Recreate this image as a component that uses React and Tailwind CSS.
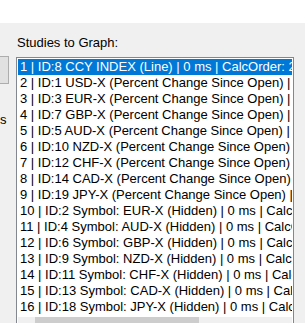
const rows = [
  "1 | ID:8 CCY INDEX (Line) | 0 ms | CalcOrder: 2",
  "2 | ID:1 USD-X (Percent Change Since Open) | 0 ms",
  "3 | ID:3 EUR-X (Percent Change Since Open) | 0 ms",
  "4 | ID:7 GBP-X (Percent Change Since Open) | 0 ms",
  "5 | ID:5 AUD-X (Percent Change Since Open) | 0 ms",
  "6 | ID:10 NZD-X (Percent Change Since Open) | 0 ms",
  "7 | ID:12 CHF-X (Percent Change Since Open) | 0 ms",
  "8 | ID:14 CAD-X (Percent Change Since Open) | 0 ms",
  "9 | ID:19 JPY-X (Percent Change Since Open) | 0 ms",
  "10 | ID:2 Symbol: EUR-X (Hidden) | 0 ms | CalcOrder: 10",
  "11 | ID:4 Symbol: AUD-X (Hidden) | 0 ms | CalcOrder: 11",
  "12 | ID:6 Symbol: GBP-X (Hidden) | 0 ms | CalcOrder: 12",
  "13 | ID:9 Symbol: NZD-X (Hidden) | 0 ms | CalcOrder: 13",
  "14 | ID:11 Symbol: CHF-X (Hidden) | 0 ms | CalcOrder: 14",
  "15 | ID:13 Symbol: CAD-X (Hidden) | 0 ms | CalcOrder: 15",
  "16 | ID:18 Symbol: JPY-X (Hidden) | 0 ms | CalcOrder: 16",
];

export default function App() {
  return (
    <div
      className="w-[305px] h-[323px] overflow-hidden bg-white flex flex-col text-[13px] leading-[16px] text-black"
      style={{ fontFamily: '"Liberation Sans", Arial, sans-serif' }}
    >
      {/* white strip on top */}
      <div className="h-[23px] shrink-0 bg-white" />

      {/* dialog body */}
      <div className="relative flex-1 bg-[#f0f0f0] pl-[16px] pr-[11px] pt-[12px]">
        {/* cut off button + label on the left edge */}
        <div className="absolute left-[-2px] top-[33px] w-[11px] h-[28px] bg-[#e1e1e1] border border-[#adadad]" />
        <span className="absolute left-[0px] top-[89px]">s</span>

        <div className="pl-[1px] mb-[6px] whitespace-nowrap">Studies to Graph:</div>

        {/* listbox */}
        <div className="border border-[#828790] bg-white p-[1px] flex flex-col">
          <div className="flex flex-col overflow-hidden">
            {rows.map((r, i) => (
              <div
                key={i}
                className={`h-[16px] pl-[2px] whitespace-nowrap ${
                  i === 0 ? "bg-[#0078d7] text-white" : ""
                }`}
              >
                {r}
              </div>
            ))}
          </div>

          {/* horizontal scroll bar */}
          <div className="mt-[2px] h-[17px] flex bg-[#f0f0f0]">
            <div className="w-[17px] flex items-center justify-center text-[#a3a3a3] text-[10px]">‹</div>
            <div className="w-[164px] bg-[#cdcdcd]" />
            <div className="flex-1" />
            <div className="w-[17px] flex items-center justify-center text-[#606060] text-[10px]">›</div>
          </div>
        </div>
      </div>
    </div>
  );
}
